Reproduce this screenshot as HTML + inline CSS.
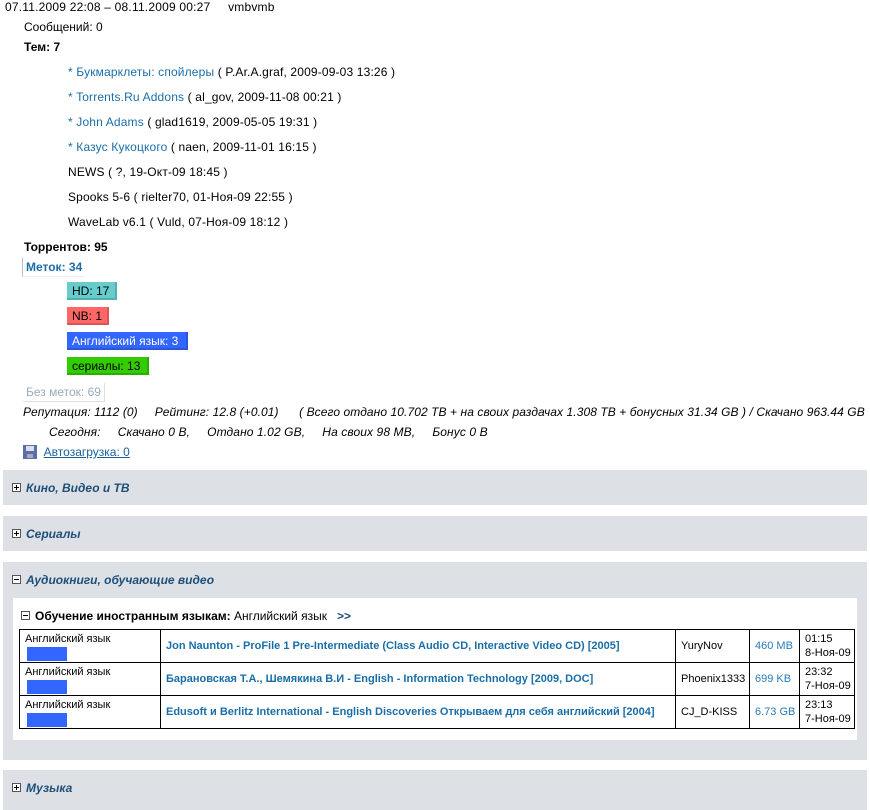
<!DOCTYPE html>
<html><head><meta charset="utf-8"><style>
body{margin:0;width:870px;height:803px;background:#fff;font-family:"Liberation Sans",Arial,sans-serif;font-size:12px;color:#000;position:relative;overflow:hidden}
.a{position:absolute;white-space:nowrap;line-height:14px}
.l{color:#1a6ea8}
.tag{position:absolute;height:18px;line-height:18px;padding:0 5px;font-size:12px;box-sizing:border-box;border-right:2px solid rgba(0,0,0,.15);border-bottom:2px solid rgba(0,0,0,.15)}
.sec{position:absolute;left:3px;width:864px;background:#dde1e6}
.sh{position:absolute;left:9px;font-weight:bold;font-style:italic;color:#1d4f78;font-size:12px}
.pm{display:inline-block;width:7px;height:7px;border:1px solid #555;position:relative;margin-right:5px;vertical-align:0;background:#fff}
.pm:before{content:"";position:absolute;left:1px;top:3px;width:5px;height:1px;background:#000}
.pl:after{content:"";position:absolute;left:3px;top:1px;width:1px;height:5px;background:#000}
table{position:absolute;left:19px;top:629px;border-collapse:collapse;font-size:11px;table-layout:fixed;width:835px}
td{border:1px solid #000;height:33px;box-sizing:border-box;padding:0 5px;vertical-align:middle;white-space:nowrap;overflow:hidden;line-height:14px}
td.c1{vertical-align:top;padding-top:2px}
.bl{width:40px;height:14px;background:#3366ff;margin-left:2px;margin-top:1px}
.t{color:#1a6ea8;font-weight:bold}
.sz{color:#2a7ab8}
</style></head><body>
<div class="a" style="left:5px;top:0;letter-spacing:.2px">07.11.2009 22:08 – 08.11.2009 00:27 &nbsp;&nbsp;&nbsp;&nbsp;vmbvmb</div>
<div class="a" style="left:24px;top:20px">Сообщений: 0</div>
<div class="a" style="left:24px;top:40px;font-weight:bold">Тем: 7</div>
<div class="a" style="left:68px;top:65px;letter-spacing:.15px"><span class="l">* Букмарклеты: спойлеры</span> ( P.Ar.A.graf, 2009-09-03 13:26 )</div>
<div class="a" style="left:68px;top:90px;letter-spacing:.15px"><span class="l">* Torrents.Ru Addons</span> ( al_gov, 2009-11-08 00:21 )</div>
<div class="a" style="left:68px;top:115px;letter-spacing:.15px"><span class="l">* John Adams</span> ( glad1619, 2009-05-05 19:31 )</div>
<div class="a" style="left:68px;top:140px;letter-spacing:.15px"><span class="l">* Казус Кукоцкого</span> ( naen, 2009-11-01 16:15 )</div>
<div class="a" style="left:68px;top:165px;letter-spacing:.15px">NEWS ( ?, 19-Окт-09 18:45 )</div>
<div class="a" style="left:68px;top:190px;letter-spacing:.15px">Spooks 5-6 ( rielter70, 01-Ноя-09 22:55 )</div>
<div class="a" style="left:68px;top:215px;letter-spacing:.15px">WaveLab v6.1 ( Vuld, 07-Ноя-09 18:12 )</div>
<div class="a" style="left:24px;top:240px;font-weight:bold">Торрентов: 95</div>
<div class="a" style="left:22px;top:258px;padding:2px 3px;border-left:1px solid #bbb;border-bottom:1px solid #eee;color:#1a6ea8;font-weight:bold">Меток: 34</div>
<div class="tag" style="left:67px;top:282px;background:#66cccc;width:50px">HD: 17</div>
<div class="tag" style="left:67px;top:307px;background:#ff6666;width:42px">NB: 1</div>
<div class="tag" style="left:67px;top:332px;background:#3366ff;color:#fff;width:121px">Английский язык: 3</div>
<div class="tag" style="left:67px;top:357px;background:#33cc00;width:82px">сериалы: 13</div>
<div class="a" style="left:23px;top:383px;padding:2px 3px;border-right:1px solid #ddd;border-bottom:1px solid #ddd;color:#9ab">Без меток: 69</div>
<div class="a" style="left:23px;top:405px;font-style:italic;letter-spacing:.08px">Репутация: 1112 (0) &nbsp;&nbsp;&nbsp;&nbsp;Рейтинг: 12.8 (+0.01) &nbsp;&nbsp;&nbsp;&nbsp;&nbsp;( Всего отдано 10.702 TB + на своих раздачах 1.308 TB + бонусных 31.34 GB ) / Скачано 963.44 GB</div>
<div class="a" style="left:49px;top:425px;font-style:italic;letter-spacing:.1px">Сегодня: &nbsp;&nbsp;&nbsp;&nbsp;Скачано 0 B, &nbsp;&nbsp;&nbsp;&nbsp;Отдано 1.02 GB, &nbsp;&nbsp;&nbsp;&nbsp;На своих 98 MB, &nbsp;&nbsp;&nbsp;&nbsp;Бонус 0 B</div>
<div class="a" style="left:23px;top:445px"><span style="display:inline-block;width:14px;height:14px;background:#5a6fa8;vertical-align:-3px;position:relative"><span style="position:absolute;left:3px;top:1px;width:8px;height:5px;background:#dde"></span><span style="position:absolute;left:4px;top:9px;width:6px;height:4px;background:#aab"></span></span> &nbsp;<span class="l" style="text-decoration:underline;color:#1a5f98">Автозагрузка: 0</span></div>

<div class="sec" style="top:470px;height:35px"><div class="sh" style="top:11px"><span class="pm pl"></span>Кино, Видео и ТВ</div></div>
<div class="sec" style="top:516px;height:35px"><div class="sh" style="top:11px"><span class="pm pl"></span>Сериалы</div></div>
<div class="sec" style="top:562px;height:198px"><div class="sh" style="top:11px"><span class="pm"></span>Аудиокниги, обучающие видео</div>
<div style="position:absolute;left:10px;top:36px;width:844px;height:142px;background:#fff"></div></div>
<div class="a" style="left:21px;top:609px"><span class="pm"></span><b>Обучение иностранным языкам:</b> Английский язык &nbsp;&nbsp;<b style="color:#1d4f78">&gt;&gt;</b></div>
<table>
<colgroup><col style="width:141px"><col style="width:515px"><col style="width:74px"><col style="width:50px"><col style="width:55px"></colgroup>
<tr><td class="c1">Английский язык<div class="bl"></div></td><td class="t">Jon Naunton - ProFile 1 Pre-Intermediate (Class Audio CD, Interactive Video CD) [2005]</td><td>YuryNov</td><td class="sz">460 MB</td><td>01:15<br>8-Ноя-09</td></tr>
<tr><td class="c1">Английский язык<div class="bl"></div></td><td class="t">Барановская Т.А., Шемякина В.И - English - Information Technology [2009, DOC]</td><td>Phoenix1333</td><td class="sz">699 KB</td><td>23:32<br>7-Ноя-09</td></tr>
<tr><td class="c1">Английский язык<div class="bl"></div></td><td class="t">Edusoft и Berlitz International - English Discoveries Открываем для себя английский [2004]</td><td>CJ_D-KISS</td><td class="sz">6.73 GB</td><td>23:13<br>7-Ноя-09</td></tr>
</table>
<div class="sec" style="top:770px;height:40px"><div class="sh" style="top:11px"><span class="pm pl"></span>Музыка</div></div>
</body></html>
